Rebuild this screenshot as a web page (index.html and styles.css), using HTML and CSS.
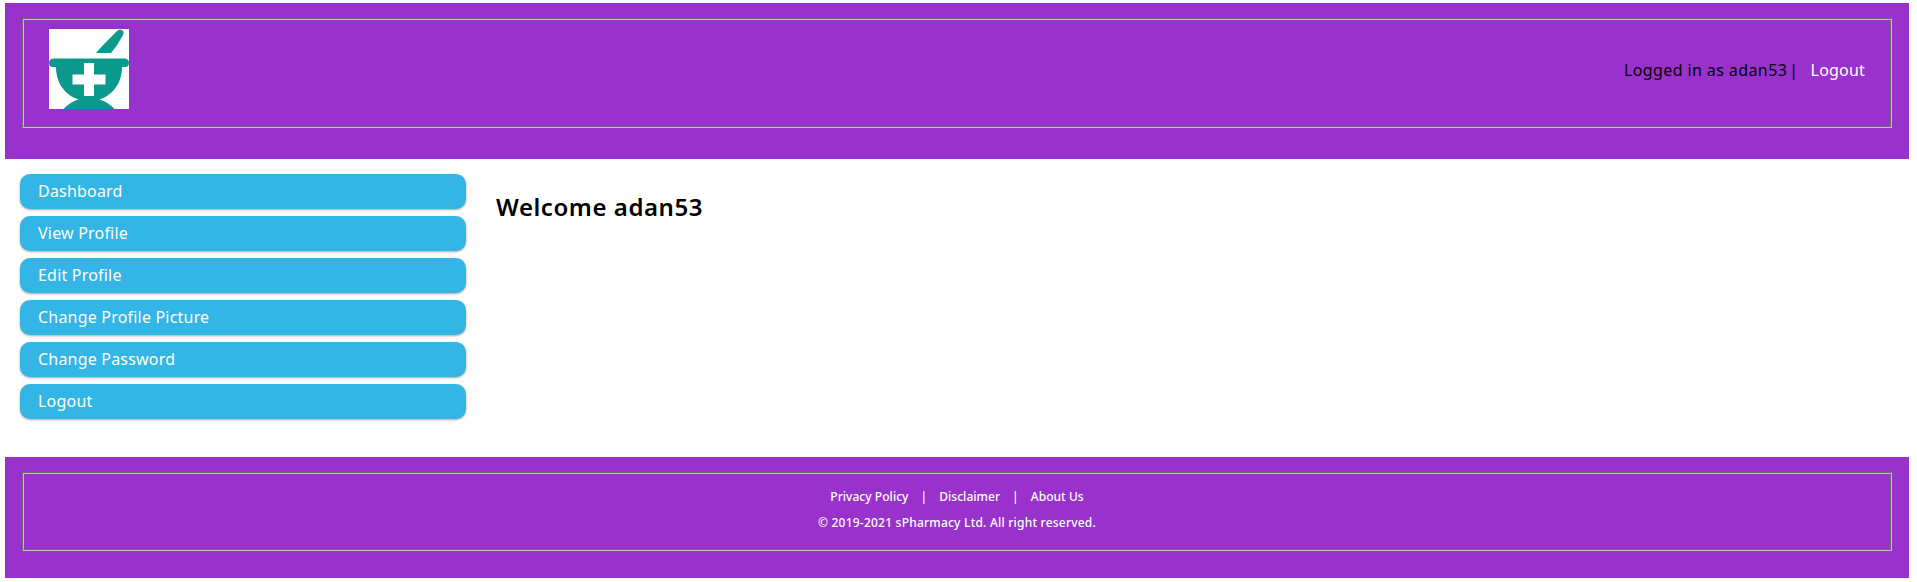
FILE: index.html
```html
<!DOCTYPE html>
<html lang="en">
<head>
<meta charset="utf-8">
<title>sPharmacy</title>
<link rel="stylesheet" href="styles.css">
</head>
<body>
<header class="band header">
  <div class="frame header-frame">
    <svg class="logo" viewBox="0 0 80 80" aria-label="sPharmacy">
      <rect width="80" height="80" fill="#fff"/>
      <g fill="#0b998d">
        <path d="M47 24C53 17 61 9 68 2Q71-1 74 2Q75 4 74 6Q69 16 62 24Z"/>
        <path d="M4 29.500H76Q80 30 80 34Q80 38 76 38H73C73 54 64 66 50.500 70.500Q59 73 65.500 80H14.500Q21 73 29.500 70.500C16 66 7 54 7 38H4Q0 38 0 34Q0 30 4 29.500Z"/>
      </g>
      <path d="M35 34H45V45.500H56.500V55.500H45V67H35V55.500H23.500V45.500H35Z" fill="#fff"/>
    </svg>
    <div class="session"><span class="user">Logged in as adan53<span class="divider"> |</span></span><a class="logout">Logout</a></div>
  </div>
</header>
<main class="main">
  <nav class="menu">
    <a class="item">Dashboard</a>
    <a class="item">View Profile</a>
    <a class="item">Edit Profile</a>
    <a class="item">Change Profile Picture</a>
    <a class="item">Change Password</a>
    <a class="item">Logout</a>
  </nav>
  <h1 class="welcome">Welcome adan53</h1>
</main>
<footer class="band footer">
  <div class="frame footer-frame">
    <div class="links"><a>Privacy Policy</a><span>|</span><a>Disclaimer</a><span>|</span><a>About Us</a></div>
    <div class="copyright">© 2019-2021 sPharmacy Ltd. All right reserved.</div>
  </div>
</footer>
</body>
</html>
```
FILE: styles.css
```css
* { box-sizing: border-box; }
body {
  margin: 0;
  padding: 3px 8px 0 5px;
  background: #fff;
  color: #000;
  font: 16px/24px "Lucida Sans", "Noto Sans", sans-serif;
  letter-spacing: 0.2px;
}
.band { background: #9932cc; padding: 15px 17px 0; }
.header { height: 156px; }
.footer { height: 121px; color: #fff; }
.frame { border: 2px groove #c0c0c0; }
.header-frame {
  height: 110px;
  display: flex;
  justify-content: space-between;
  padding: 9px 25px 0;
}
.logo { width: 80px; height: 80px; }
.session { display: flex; gap: 12px; padding-top: 29px; }
.user { letter-spacing: 0.4px; }
.divider { word-spacing: -2.5px; }
.logout { color: #fff; }
.main { height: 298px; display: flex; padding: 15px 15px 0; }
.menu { width: 446px; display: flex; flex-direction: column; gap: 7px; }
.item {
  height: 35px;
  padding: 5px 18px;
  border-radius: 10px;
  background: #33b5e5;
  color: #fff;
  box-shadow: 0 1px 3px rgba(0,0,0,.12), 0 1px 2px rgba(0,0,0,.24);
}
.welcome { margin: 16px 0 0 30px; font-size: 24px; font-weight: 600; line-height: 34px; letter-spacing: 0.55px; }
.footer-frame { height: 79px; font-size: 12px; font-weight: 500; line-height: 18px; padding-top: 14px; text-align: center; }
.links { display: flex; justify-content: center; gap: 12px; margin-bottom: 8px; letter-spacing: 0.05px; }
.copyright { letter-spacing: 0.22px; }
```
